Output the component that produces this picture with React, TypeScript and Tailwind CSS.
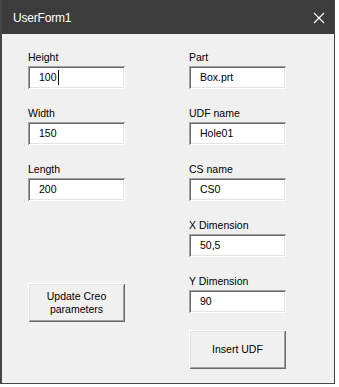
import type { ReactNode } from 'react'

const font = { fontFamily: '"Liberation Sans", Arial, sans-serif' }

function Field({ label, value, caret }: { label: string; value: string; caret?: boolean }) {
  return (
    <div className="flex flex-col">
      <div className="h-[17px] text-[10.5px] leading-[17px] text-black">{label}</div>
      <div className="flex h-[23px] w-[97px] items-center bg-white pl-[11px] text-[10.5px] text-black shadow-[inset_1px_1px_0_#a0a0a0,inset_-1px_-1px_0_#ffffff,inset_2px_2px_0_#696969,inset_-2px_-2px_0_#e3e3e3]">
        <span>{value}</span>
        {caret && <span className="ml-px h-[15px] w-px bg-black" />}
      </div>
    </div>
  )
}

function Button({ children, className = '' }: { children: ReactNode; className?: string }) {
  return (
    <div
      className={`flex h-[39px] w-[97px] items-center justify-center bg-[#f0f0f0] text-center text-[10.5px] leading-[13px] text-black shadow-[inset_1px_1px_0_#ffffff,inset_-1px_-1px_0_#696969,inset_2px_2px_0_#e3e3e3,inset_-2px_-2px_0_#a0a0a0] ${className}`}
    >
      {children}
    </div>
  )
}

export default function App() {
  return (
    <div className="h-[387px] w-[339px] bg-white" style={font}>
      <div className="flex h-[384px] w-[335px] flex-col border-b border-l-2 border-r border-[#464646] bg-[#f0f0f0]">
        {/* title bar */}
        <div className="flex h-[34px] shrink-0 items-center justify-between bg-[#3c3c3c] pl-[11px] pr-[9px]">
          <span className="pt-[2px] text-[12px] tracking-[-0.2px] text-white">UserForm1</span>
          <svg width="12" height="12" viewBox="0 0 12 12" className="mt-px">
            <path d="M1 1l10 10M11 1L1 11" stroke="#ffffff" strokeWidth="1.1" />
          </svg>
        </div>

        <div className="flex gap-[64px] pl-[26px] pt-[15px]">
          <div className="flex flex-col gap-[16px]">
            <Field label="Height" value="100" caret />
            <Field label="Width" value="150" />
            <Field label="Length" value="200" />
            <Button className="mt-[66px]">
              Update Creo
              <br />
              parameters
            </Button>
          </div>

          <div className="flex flex-col gap-[16px]">
            <Field label="Part" value="Box.prt" />
            <Field label="UDF name" value="Hole01" />
            <Field label="CS name" value="CS0" />
            <Field label="X Dimension" value="50,5" />
            <Field label="Y Dimension" value="90" />
            <Button className="mt-px">Insert UDF</Button>
          </div>
        </div>
      </div>
    </div>
  )
}
